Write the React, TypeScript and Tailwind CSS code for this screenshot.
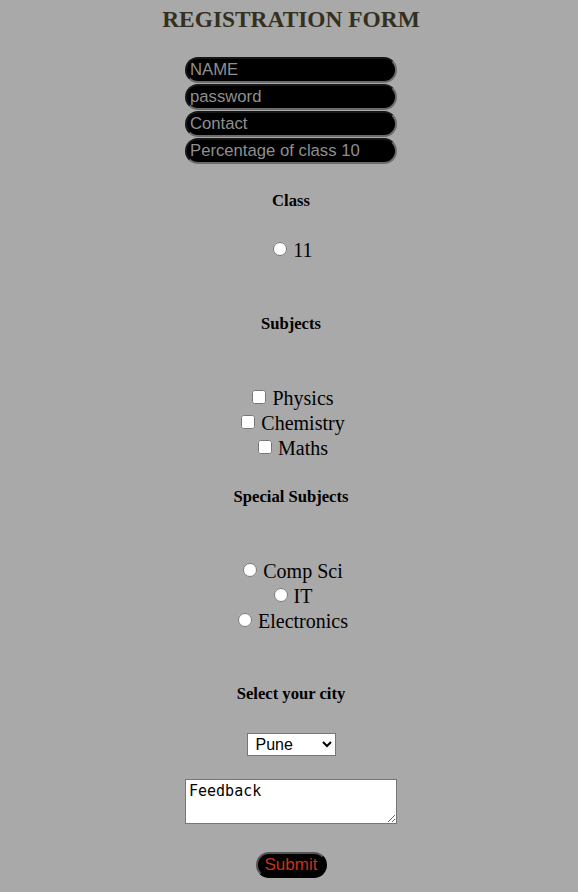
import React from "react";

const serif = "font-['Times_New_Roman','Liberation_Serif',serif]";
const sans = "font-['Arial','Liberation_Sans',sans-serif]";

function TextInput({ placeholder }: { placeholder: string }) {
  return (
    <input
      type="text"
      placeholder={placeholder}
      className={`${sans} box-border h-[26px] w-[212px] rounded-[13px] border-2 border-[#6b6b6b] [border-style:inset] bg-black pl-[3px] pr-[3px] text-[16.7px] text-[#9a9a9a] placeholder:text-[#8f8f8f] outline-none`}
    />
  );
}

function Check({ label }: { label: string }) {
  return (
    <label className="flex h-[25px] items-center justify-center gap-[6px] pl-[4px]">
      <input type="checkbox" className="m-0 h-[14px] w-[14px] -translate-y-[2px]" />
      <span className={`${serif} text-[20px] leading-[23px] text-black`}>{label}</span>
    </label>
  );
}

function Radio({ label, name }: { label: string; name: string }) {
  return (
    <label className="flex h-[25px] items-center justify-center gap-[6px] pl-[4px]">
      <input type="radio" name={name} className="m-0 h-[14px] w-[14px] -translate-y-[2px]" />
      <span className={`${serif} text-[20px] leading-[23px] text-black`}>{label}</span>
    </label>
  );
}

function Heading({ children, className = "" }: { children: React.ReactNode; className?: string }) {
  return (
    <h4 className={`${serif} text-center text-[16.6px] font-bold leading-[18px] text-black ${className}`}>
      {children}
    </h4>
  );
}

export default function App() {
  return (
    <div className="min-h-[892px] w-full bg-[#a9a9a9] flex flex-col items-center pl-[4px]">
      <h2 className={`${serif} mt-[6px] text-[23.4px] font-bold leading-[27px] text-[#33301f]`}>
        REGISTRATION FORM
      </h2>
      <div className="mt-[24px] flex flex-col gap-[1px]">
        <TextInput placeholder="NAME" />
        <TextInput placeholder="password" />
        <TextInput placeholder="Contact" />
        <TextInput placeholder="Percentage of class 10" />
      </div>
      <Heading className="mt-[28px]">Class</Heading>
      <div className="mt-[28px]">
        <Radio name="class" label="11" />
      </div>
      <Heading className="mt-[52px]">Subjects</Heading>
      <div className="mt-[53px] flex flex-col">
        <Check label="Physics" />
        <Check label="Chemistry" />
        <Check label="Maths" />
      </div>
      <Heading className="mt-[27px]">Special Subjects</Heading>
      <div className="mt-[53px] flex flex-col">
        <Radio name="special" label="Comp Sci" />
        <Radio name="special" label="IT" />
        <Radio name="special" label="Electronics" />
      </div>
      <Heading className="mt-[51px]">Select your city</Heading>
      <select
        defaultValue="Pune"
        className={`${sans} mt-[30px] h-[23px] w-[89px] border border-[#767676] bg-white px-[4px] text-[16px] text-black`}
      >
        <option>Pune</option>
        <option>Mumbai</option>
        <option>Nagpur</option>
      </select>
      <textarea
        defaultValue="Feedback"
        className="mt-[23px] box-border h-[45px] w-[212px] border border-[#767676] bg-white px-[3px] py-[2px] font-['DejaVu_Sans_Mono',monospace] text-[15px] leading-[18px] text-black"
      />
      <button
        className={`${sans} mt-[28px] box-border h-[26px] w-[71px] rounded-[13px] border-2 border-[#555] [border-style:outset] bg-black text-[17px] leading-[20px] text-[#c8331a]`}
      >
        Submit
      </button>
    </div>
  );
}
